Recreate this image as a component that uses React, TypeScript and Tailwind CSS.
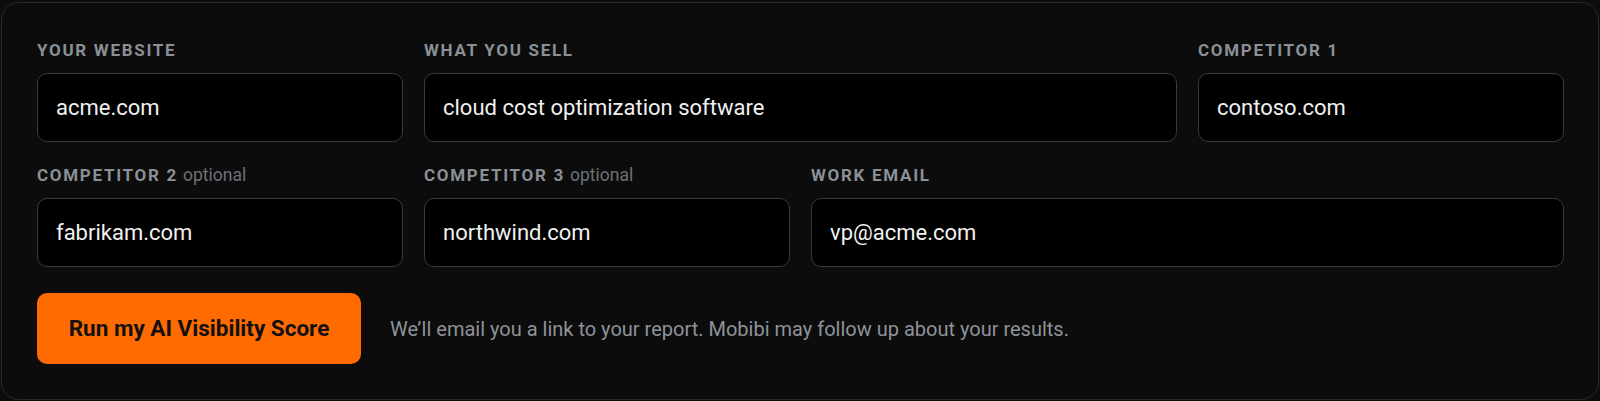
import React from "react";

const font = { fontFamily: "Roboto, 'Liberation Sans', Arial, sans-serif" };

function Field({
  label,
  optional,
  value,
  span2,
}: {
  label: string;
  optional?: boolean;
  value: string;
  span2?: boolean;
}) {
  return (
    <div className={span2 ? "col-span-2 flex flex-col gap-[11px]" : "flex flex-col gap-[11px]"}>
      <div className="h-6 leading-6 whitespace-nowrap">
        <span className="text-[17px] font-bold uppercase tracking-[0.1em] text-[#8b9096]">{label}</span>
        {optional && <span className="ml-[5px] text-[17.5px] text-[#6c7178] font-normal">optional</span>}
      </div>
      <div className="h-[69px] rounded-[10px] border border-[#3a3a3a] bg-black flex items-center px-[18px]">
        <span className="text-[22px] text-[#f0f0f0]">{value}</span>
      </div>
    </div>
  );
}

export default function App() {
  return (
    <div className="w-[1600px] h-[401px] bg-[#0d0d0d] px-px pt-[2px] pb-px" style={font}>
      <div className="h-full rounded-[18px] border border-[#2a2a2a] bg-[#0c0c0c] pl-[35px] pr-[34px] pt-[35px]">
        <div className="grid grid-cols-4 gap-x-[21px] gap-y-[21px]">
          <Field label="Your Website" value="acme.com" />
          <Field label="What You Sell" value="cloud cost optimization software" span2 />
          <Field label="Competitor 1" value="contoso.com" />
          <Field label="Competitor 2" optional value="fabrikam.com" />
          <Field label="Competitor 3" optional value="northwind.com" />
          <Field label="Work Email" value="vp@acme.com" span2 />
        </div>
        <div className="mt-[26px] flex items-center gap-[29px]">
          <button className="h-[71px] w-[324px] rounded-[10px] bg-[#ff6b00] text-[#111111] font-bold text-[22.5px]">
            Run my AI Visibility Score
          </button>
          <span className="text-[20px] text-[#8e9399]">
            We’ll email you a link to your report. Mobibi may follow up about your results.
          </span>
        </div>
      </div>
    </div>
  );
}
